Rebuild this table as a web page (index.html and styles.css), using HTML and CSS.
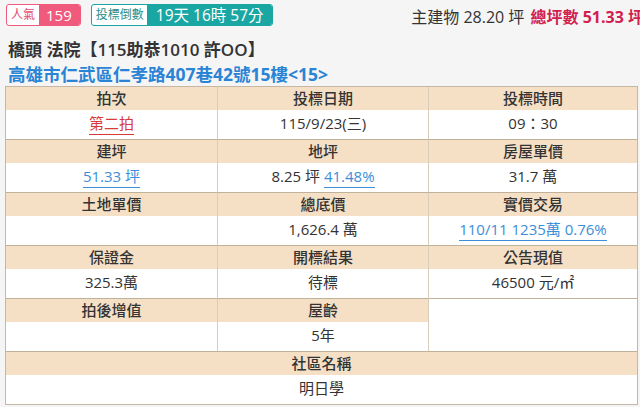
FILE: index.html
```html
<!DOCTYPE html>
<html lang="zh-Hant">
<head>
<meta charset="utf-8">
<link rel="stylesheet" href="styles.css">
</head>
<body>
<div class="wrap">
  <div class="topbar">
    <div class="badges">
      <span class="badge pink"><span class="lbl">人氣</span><span class="val">159</span></span>
      <span class="badge teal"><span class="lbl">投標倒數</span><span class="val">19天 16時 57分</span></span>
    </div>
    <div class="stats">主建物 28.20 坪 <span class="total">總坪數 51.33 坪</span></div>
  </div>
  <div class="title">橋頭 法院【115助恭1010 許OO】</div>
  <div class="addr">高雄市仁武區仁孝路407巷42號15樓&lt;15&gt;</div>

  <div class="grid">
    <div class="cell"><div class="h">拍次</div><div class="v"><span class="link red">第二拍</span></div></div>
    <div class="cell"><div class="h">投標日期</div><div class="v">115/9/23(三)</div></div>
    <div class="cell"><div class="h">投標時間</div><div class="v">09：30</div></div>

    <div class="cell"><div class="h">建坪</div><div class="v"><span class="link">51.33 坪</span></div></div>
    <div class="cell"><div class="h">地坪</div><div class="v">8.25 坪 <span class="link">41.48%</span></div></div>
    <div class="cell"><div class="h">房屋單價</div><div class="v">31.7 萬</div></div>

    <div class="cell"><div class="h">土地單價</div><div class="v"></div></div>
    <div class="cell"><div class="h">總底價</div><div class="v">1,626.4 萬</div></div>
    <div class="cell"><div class="h">實價交易</div><div class="v"><span class="link">110/11 1235萬 0.76%</span></div></div>

    <div class="cell"><div class="h">保證金</div><div class="v">325.3萬</div></div>
    <div class="cell"><div class="h">開標結果</div><div class="v">待標</div></div>
    <div class="cell"><div class="h">公告現值</div><div class="v">46500 元/㎡</div></div>

    <div class="cell"><div class="h">拍後增值</div><div class="v"></div></div>
    <div class="cell"><div class="h">屋齡</div><div class="v">5年</div></div>
    <div class="cell empty"></div>

    <div class="cell full"><div class="h">社區名稱</div><div class="v">明日學</div></div>
  </div>
</div>
</body>
</html>
```
FILE: styles.css
```css
html, body {
  margin: 0;
  padding: 0;
  background: #f5f5f5;
  overflow: hidden;
}
body {
  font-family: "Open Sans", "Noto Sans CJK TC", sans-serif;
  color: #333;
}
.wrap {
  padding: 4px 0 0 5px;
}
.topbar {
  display: flex;
  justify-content: space-between;
  align-items: flex-start;
  height: 22px;
}
.badges {
  display: flex;
  gap: 10px;
  margin-left: 1px;
}
.badge {
  display: flex;
  height: 22px;
  box-sizing: border-box;
  border-radius: 3px;
  overflow: hidden;
  border: 1px solid;
  background: #fff;
}
.badge .lbl {
  font-size: 12px;
  line-height: 20px;
  padding: 0 3px 0 4px;
}
.badge .val {
  color: #fff;
  font-size: 15px;
  line-height: 20px;
  padding: 0 7px;
}
.pink { border-color: #f05a7c; }
.pink .lbl { color: #e44b6c; padding-right: 4px; }
.pink .val { background: #f05a7c; padding: 0 8px 0 7px; }
.teal { border-color: #1aa7a3; }
.teal .lbl { color: #2a8f8c; }
.teal .val { background: #1aa7a3; padding: 0 8px 0 9px; font-size: 15.5px; }
.stats {
  font-size: 16px;
  line-height: 20px;
  white-space: nowrap;
  margin-right: -4px;
  margin-top: 3px;
}
.stats .total {
  color: #d2204e;
  font-weight: 700;
  margin-left: 2px;
}
.title {
  font-size: 17px;
  font-weight: 600;
  line-height: 24px;
  margin-top: 12px;
  margin-left: 3px;
  color: #333;
}
.addr {
  font-size: 17.5px;
  font-weight: 700;
  line-height: 24px;
  margin-left: 3px;
  color: #2a84d6;
}
.grid {
  margin-top: 0;
  width: 633px;
  box-sizing: border-box;
  display: grid;
  grid-template-columns: 211px 211px 209px;
  border: 1px solid #c4b7a4;
  background: #fff;
}
.cell {
  border-left: 1px solid #d8ccbb;
  border-top: 1px solid #c0b19a;
  text-align: center;
  font-size: 15px;
}
.cell:nth-child(3n+1) { border-left: none; }
.cell:nth-child(-n+3) { border-top: none; }
.cell.full {
  grid-column: 1 / 4;
  border-left: none;
}
.h {
  background: #f5e0c6;
  height: 23px;
  line-height: 23px;
  font-weight: 500;
  color: #333;
}
.v {
  height: 29px;
  line-height: 27px;
  color: #333;
}
.link {
  color: #3d8ed8;
  border-bottom: 1px solid #3d8ed8;
  padding-bottom: 1px;
}
.link.red {
  color: #d83a3a;
  border-bottom-color: #d83a3a;
}
```
